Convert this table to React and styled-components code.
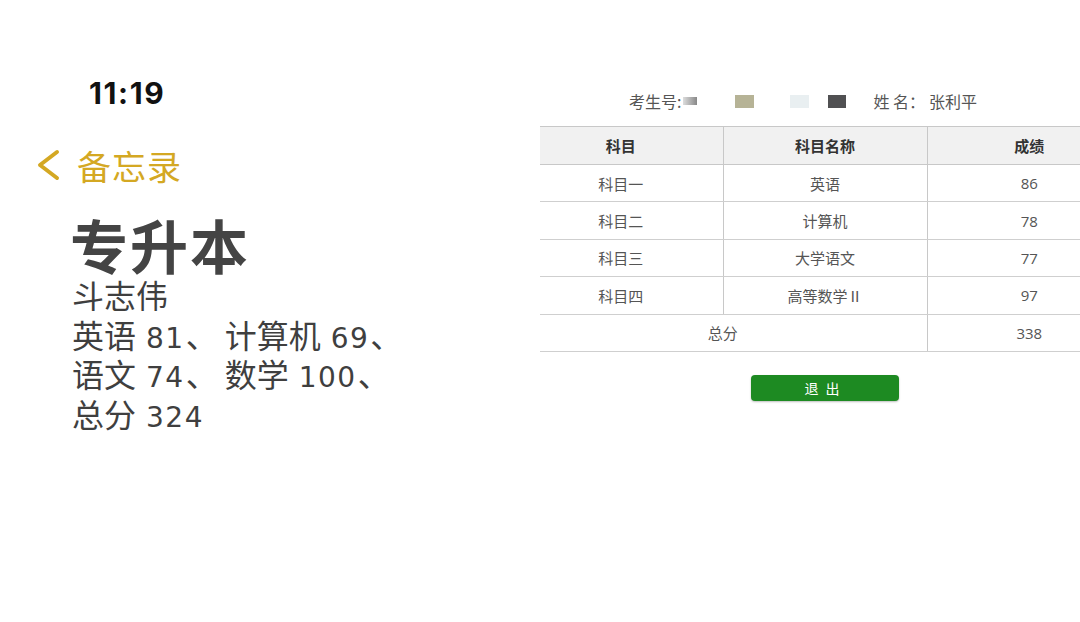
import React from "react";
import styled, { createGlobalStyle } from "styled-components";

const Global = createGlobalStyle`
  html, body { margin: 0; padding: 0; background: #ffffff; }
  body { font-family: "Noto Sans CJK SC", "Noto Sans", sans-serif; }
  #root { width: 1080px; height: 622px; overflow: hidden; }
`;

const Page = styled.div`
  display: flex;
  width: 1080px;
  height: 622px;
  background: #ffffff;
  overflow: hidden;
`;

const Memo = styled.div`
  width: 540px;
  flex: none;
  display: flex;
  flex-direction: column;
`;

const Time = styled.div`
  margin: 78px 0 0 89px;
  height: 30px;
  line-height: 30px;
  font-family: Inter, "Open Sans", sans-serif;
  font-weight: 700;
  font-size: 30px;
  color: #111;
  letter-spacing: 1.6px;
`;

const Nav = styled.div`
  margin: 37px 0 0 35px;
  height: 40px;
  display: flex;
  align-items: center;
  gap: 16px;
  color: #d4a823;
  font-size: 34px;
  font-family: "Noto Sans CJK SC", sans-serif;
  letter-spacing: 1px;
`;

const Title = styled.h1`
  margin: 29px 0 0 70px;
  height: 60px;
  line-height: 60px;
  font-size: 58px;
  font-weight: 600;
  color: #444;
  letter-spacing: 2px;
  font-family: "Noto Sans CJK SC", sans-serif;
`;

const Body = styled.div`
  margin: 1px 0 0 72px;
  font-size: 32px;
  line-height: 39.5px;
  color: #3f3f3f;
  font-family: "Noto Sans CJK SC", sans-serif;
`;

const Line = styled.div`
  height: 39.5px;
  white-space: nowrap;
`;

const Num = styled.span`
  font-family: "DejaVu Sans", "Open Sans", sans-serif;
  font-size: 28px;
  letter-spacing: 1.5px;
  margin: 0 1px 0 10px;
`;

const Sep = styled.span`
  margin-right: 7px;
`;

const Score = styled.div`
  width: 540px;
  flex: none;
  overflow: hidden;
  padding-top: 90px;
`;

const Info = styled.div`
  height: 22px;
  display: flex;
  align-items: center;
  padding-left: 89px;
  font-size: 16px;
  color: #555;
  margin-bottom: 14px;
`;

const Label = styled.span`
  white-space: pre;
  margin-right: ${(p) => p.$mr || 0}px;
`;

const Blur = styled.span`
  display: inline-block;
  width: ${(p) => p.$w}px;
  height: ${(p) => p.$h}px;
  background: ${(p) => p.$bg};
  margin-left: ${(p) => p.$ml || 0}px;
  margin-right: ${(p) => p.$mr}px;
  filter: blur(0.6px);
`;

const Table = styled.table`
  width: 612px;
  margin-left: -21px;
  border-collapse: collapse;
  table-layout: fixed;
  font-size: 15px;
  color: #555;
`;

const Th = styled.th`
  height: 37px;
  background: #f1f1f1;
  font-weight: 700;
  color: #333;
  font-size: 15px;
  border-top: 1px solid #c8c8c8;
  border-bottom: 1px solid #c8c8c8;
  border-left: ${(p) => (p.$first ? "none" : "1px solid #c8c8c8")};
  padding: 0;
`;

const Td = styled.td`
  height: 36.4px;
  text-align: center;
  border-bottom: 1px solid #cfcfcf;
  border-left: ${(p) => (p.$first ? "none" : "1px solid #c8c8c8")};
  padding: 0;
  font-family: ${(p) => (p.$num ? '"Open Sans", "Noto Sans", sans-serif' : '"Noto Sans CJK SC", sans-serif')};
`;

const Exit = styled.button`
  display: block;
  margin: 23px 0 0 211px;
  width: 148px;
  height: 26px;
  border: none;
  border-radius: 4px;
  background: #1d8a22;
  color: #fff;
  font-size: 14px;
  font-family: "Noto Sans CJK SC", sans-serif;
  letter-spacing: 7px;
  padding-left: 7px;
  box-shadow: 0 1px 2px rgba(0, 0, 0, 0.25);
`;

const rows = [
  ["科目一", "英语", "86"],
  ["科目二", "计算机", "78"],
  ["科目三", "大学语文", "77"],
  ["科目四", "高等数学Ⅱ", "97"],
];

export default function App() {
  return (
    <Page>
      <Global />
      <Memo>
        <Time>11:19</Time>
        <Nav>
          <svg width="26" height="34" viewBox="0 0 26 34">
            <polyline
              points="22,4 5,17 22,30"
              fill="none"
              stroke="#d4a823"
              strokeWidth="4"
              strokeLinecap="round"
              strokeLinejoin="round"
            />
          </svg>
          <span>备忘录</span>
        </Nav>
        <Title>专升本</Title>
        <Body>
          <Line>斗志伟</Line>
          <Line>
            英语<Num>81</Num>
            <Sep>、</Sep>计算机<Num>69</Num>、
          </Line>
          <Line>
            语文<Num>74</Num>
            <Sep>、</Sep>数学<Num>100</Num>、
          </Line>
          <Line>
            总分<Num>324</Num>
          </Line>
        </Body>
      </Memo>
      <Score>
        <Info>
          <Label>考生号:</Label>
          <Blur $w={14} $h={8} $ml={2} $bg="linear-gradient(90deg,#ddd,#888)" $mr={38} />
          <Blur $w={19} $h={13} $bg="#b6b396" $mr={36} />
          <Blur $w={19} $h={13} $bg="#e9eff1" $mr={19} />
          <Blur $w={18} $h={13} $bg="#505052" $mr={27} />
          <Label $mr={4}>姓 名：</Label>
          <Label>张利平</Label>
        </Info>
        <Table>
          <colgroup>
            <col style={{ width: 204 }} />
            <col style={{ width: 204 }} />
            <col style={{ width: 204 }} />
          </colgroup>
          <thead>
            <tr>
              <Th $first>科目</Th>
              <Th>科目名称</Th>
              <Th>成绩</Th>
            </tr>
          </thead>
          <tbody>
            {rows.map((r) => (
              <tr key={r[0]}>
                <Td $first>{r[0]}</Td>
                <Td>{r[1]}</Td>
                <Td $num>{r[2]}</Td>
              </tr>
            ))}
            <tr>
              <Td $first colSpan={2}>总分</Td>
              <Td $num>338</Td>
            </tr>
          </tbody>
        </Table>
        <Exit>退出</Exit>
      </Score>
    </Page>
  );
}
